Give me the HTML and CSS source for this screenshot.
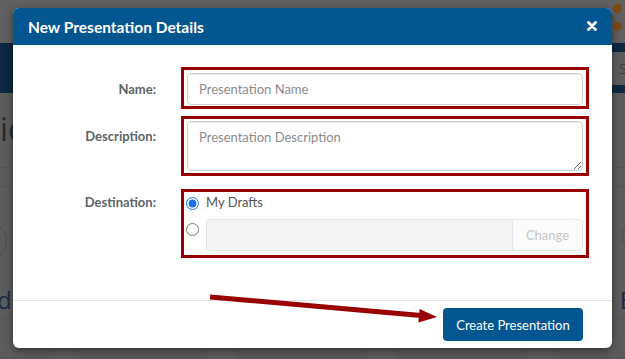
FILE: index.html
```html
<!DOCTYPE html>
<html lang="en">
<head>
<meta charset="utf-8">
<title>New Presentation Details</title>
<link rel="stylesheet" href="styles.css">
</head>
<body>
<div class="site">
  <header class="topbar">
    <div class="logo-dots"><span class="dot d1"></span><span class="dot d2"></span><span class="dot d3"></span></div>
  </header>
  <nav class="nav">
    <div class="search">Search</div>
  </nav>
  <main class="content">
    <h1 class="page-title">ic</h1>
    <div class="subbar"></div>
    <div class="avatars"><span class="avatar left"></span><span class="avatar right"></span></div>
    <div class="section-head"><span>de</span><span>E</span></div>
    <div class="cards">
      <div class="card first">o</div>
      <div class="card"></div>
      <div class="card mid"></div>
      <div class="card"></div>
      <div class="card last"></div>
    </div>
  </main>
</div>

<div class="modal">
  <div class="modal-header">
    <h2 class="modal-title">New Presentation Details</h2>
    <svg class="close" width="10" height="10" viewBox="0 0 10 10"><path d="M1.5 1.5 L8.5 8.5 M8.5 1.5 L1.5 8.5" stroke="#fff" stroke-width="2.8" stroke-linecap="round"/></svg>
  </div>
  <div class="modal-body">
    <div class="field field-name">
      <label class="label">Name:</label>
      <div class="annot annot-name"><input class="control" type="text" placeholder="Presentation Name"></div>
    </div>
    <div class="field field-desc">
      <label class="label">Description:</label>
      <div class="annot annot-desc"><textarea class="control area" placeholder="Presentation Description"></textarea></div>
    </div>
    <div class="field field-dest">
      <label class="label">Destination:</label>
      <div class="annot annot-dest">
        <div class="radio-row first-row"><input class="radio" type="radio" name="dest" checked><span class="radio-text">My Drafts</span></div>
        <div class="radio-row second-row"><input class="radio" type="radio" name="dest">
          <div class="input-group"><input class="group-input" type="text" disabled><span class="addon">Change</span></div>
        </div>
      </div>
    </div>
  </div>
  <div class="modal-footer">
    <button class="btn-primary" type="button">Create Presentation</button>
  </div>
</div>

<svg class="arrow" width="625" height="359" viewBox="0 0 625 359">
  <line x1="210" y1="297" x2="421" y2="315.5" stroke="#990000" stroke-width="5"/>
  <polygon points="437,317 419.6,309 418.4,322.5" fill="#990000"/>
</svg>
</body>
</html>
```

FILE: styles.css
```css
html, body {
  margin: 0;
  padding: 0;
}
body {
  width: 625px;
  height: 359px;
  overflow: hidden;
  background: #5c5c5c;
  font-family: "Lato", "Liberation Sans", sans-serif;
  position: relative;
}

/* dimmed page behind the dialog */
.site {
  width: 625px;
}
.topbar {
  height: 43px;
  background: #606060;
  display: flex;
  justify-content: flex-end;
}
.logo-dots {
  width: 24px;
  position: relative;
}
.dot {
  position: absolute;
  width: 9px;
  height: 9px;
  border-radius: 50%;
  background: #7b4b14;
}
.d1 { left: 12px; top: 4px; }
.d2 { left: 3px; top: 13px; }
.d3 { left: 12px; top: 22px; }

.nav {
  height: 50px;
  background: #0d2840;
  display: flex;
  justify-content: flex-end;
  align-items: flex-start;
  padding-top: 9px;
  box-sizing: border-box;
}
.search {
  width: 60px;
  height: 33px;
  background: #5d5d5d;
  color: #3e3e3e;
  font-family: "Open Sans", sans-serif;
  font-size: 14px;
  line-height: 33px;
  padding-left: 26px;
  box-sizing: border-box;
  margin-right: -28px;
}

.content {
  color: #262626;
}
.page-title {
  margin: 0;
  height: 75px;
  box-sizing: border-box;
  padding-top: 16px;
  font-family: "Open Sans", sans-serif;
  font-weight: 400;
  font-size: 32px;
  line-height: 40px;
  color: #2a2a2a;
  border-bottom: 1px solid #545454;
}
.subbar {
  height: 18px;
  border-bottom: 1px solid #545454;
}
.avatars {
  height: 100px;
  display: flex;
  justify-content: space-between;
  align-items: center;
}
.avatar {
  width: 36px;
  height: 36px;
  border: 1px solid #4e4e4e;
  border-radius: 50%;
}
.avatar.left { margin-left: -31px; margin-top: 8px; }
.avatar.right { margin-right: -35px; margin-top: -2px; }
.section-head {
  display: flex;
  justify-content: space-between;
  font-family: "Open Sans", sans-serif;
  font-size: 24px;
  line-height: 30px;
  color: #142c47;
  margin-top: -2px;
}
.section-head span:first-child { margin-left: -3px; }
.section-head span:last-child { margin-right: -8px; }
.cards {
  display: flex;
  gap: 30px;
  margin-top: 3px;
}
.card {
  height: 40px;
  border: 1px solid #545454;
  border-radius: 3px;
  flex: 1;
  font-size: 14px;
  color: #2a2a2a;
  padding: 6px 3px;
  box-sizing: border-box;
}
.card.first { margin-left: -80px; }
.card.last { margin-right: -60px; }

/* dialog */
.modal {
  position: absolute;
  left: 13px;
  top: 8px;
  width: 599px;
  background: #fff;
  border-radius: 6px;
  overflow: hidden;
  box-shadow: 0 3px 9px rgba(0, 0, 0, 0.45);
}
.modal-header {
  height: 37px;
  background: #03568f;
  display: flex;
  align-items: center;
  justify-content: space-between;
  padding: 0 15px;
}
.modal-title {
  margin: 0;
  color: #fff;
  font-size: 15.5px;
  font-weight: 700;
  line-height: 20px;
}
.close {
  display: block;
  margin-top: -2px;
}
.modal-body {
  padding: 22px 23px 42px 0;
}
.field {
  display: grid;
  grid-template-columns: 143px 1fr;
  column-gap: 25px;
}
.field-desc { margin-top: 7px; }
.field-dest { margin-top: 13px; }
.label {
  text-align: right;
  font-size: 13px;
  font-weight: 700;
  color: #5c6667;
  line-height: 20px;
}
.field-name .label { padding-top: 12px; }
.field-desc .label { padding-top: 10px; }
.field-dest .label { padding-top: 3px; }

.annot {
  border: 3px solid #990000;
}
.annot-name { padding: 3px 3px 1px; }
.annot-desc { padding: 2px 3px 2px; }
.annot-dest { padding: 1px 3px 4px 2px; }

.control {
  display: block;
  width: 100%;
  box-sizing: border-box;
  height: 32px;
  border: 1px solid #cfcfcf;
  border-radius: 4px;
  box-shadow: inset 0 1px 1px rgba(0, 0, 0, 0.075);
  padding: 0 11px;
  font-family: "Lato", "Liberation Sans", sans-serif;
  font-size: 13px;
  color: #555;
  background: #fff;
  margin: 0;
}
.control::placeholder { color: #8c8c8c; }
.area {
  height: 50px;
  padding: 5px 11px;
  line-height: 20px;
  resize: vertical;
}

.radio-row {
  display: flex;
  gap: 7px;
}
.first-row {
  height: 20px;
  align-items: center;
}
.second-row {
  margin-top: 6px;
  align-items: flex-start;
}
.radio {
  width: 13px;
  height: 13px;
  margin: 0;
  accent-color: #1a73e8;
  flex: none;
}
.second-row .radio { margin-top: 4px; }
.radio-text {
  font-size: 13px;
  color: #555;
  line-height: 20px;
  margin-top: -3px;
}
.input-group {
  flex: 1;
  display: flex;
  height: 32px;
}
.group-input {
  flex: 1;
  min-width: 0;
  margin: 0;
  border: 1px solid #e6e6e6;
  border-right: none;
  border-radius: 4px 0 0 4px;
  background: #f4f4f4;
  box-sizing: border-box;
  height: 32px;
}
.addon {
  width: 71px;
  box-sizing: border-box;
  border: 1px solid #e6e6e6;
  border-radius: 0 4px 4px 0;
  background: #fbfbfb;
  color: #c4c4c4;
  font-size: 13px;
  line-height: 30px;
  text-align: center;
}

.modal-footer {
  border-top: 1px solid #e5e5e5;
  padding: 7px 29px 7px;
  display: flex;
  justify-content: flex-end;
}
.btn-primary {
  height: 33px;
  width: 140px;
  border: none;
  border-radius: 4px;
  background: #03568f;
  color: #fff;
  font-family: "Lato", "Liberation Sans", sans-serif;
  font-size: 13px;
  padding: 0;
}

.arrow {
  position: absolute;
  left: 0;
  top: 0;
  pointer-events: none;
}
```
